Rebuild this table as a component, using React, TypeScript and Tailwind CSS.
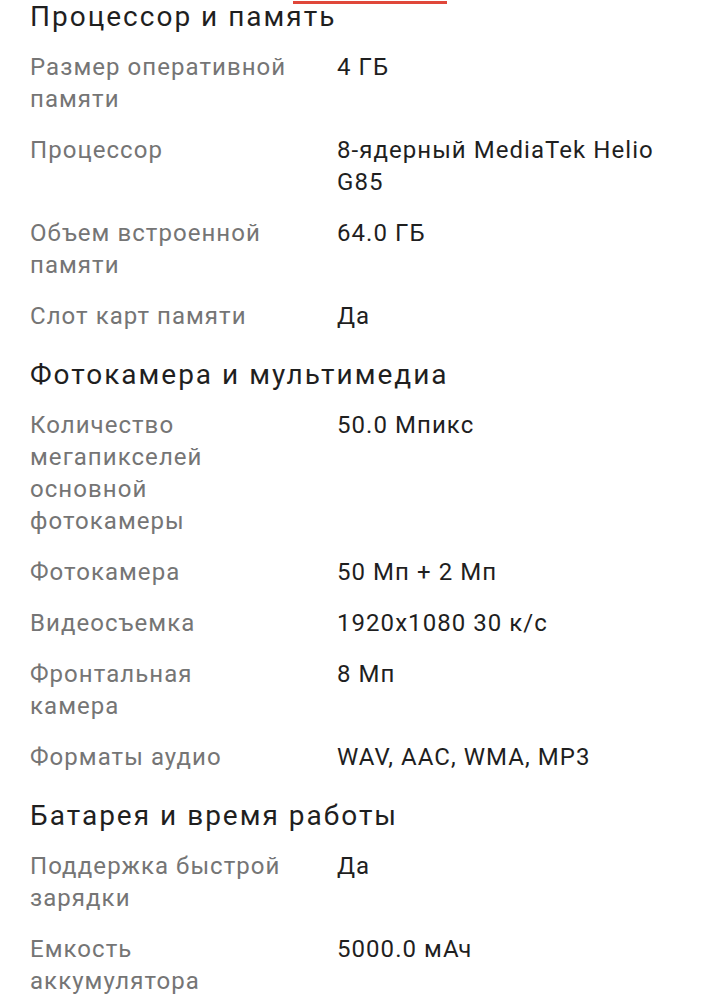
import { Fragment } from 'react'

interface Spec {
  label: string
  value: string
}

interface Section {
  title: string
  specs: Spec[]
}

// labels wrap on their own; \n forces a break where the device font wrapped earlier
const sections: Section[] = [
  {
    title: 'Процессор и память',
    specs: [
      { label: 'Размер оперативной памяти', value: '4 ГБ' },
      { label: 'Процессор', value: '8-ядерный MediaTek Helio G85' },
      { label: 'Объем встроенной памяти', value: '64.0 ГБ' },
      { label: 'Слот карт памяти', value: 'Да' },
    ],
  },
  {
    title: 'Фотокамера и мультимедиа',
    specs: [
      { label: 'Количество мегапикселей основной фотокамеры', value: '50.0 Мпикс' },
      { label: 'Фотокамера', value: '50 Мп + 2 Мп' },
      { label: 'Видеосъемка', value: '1920x1080 30 к/с' },
      { label: 'Фронтальная\nкамера', value: '8 Мп' },
      { label: 'Форматы аудио', value: 'WAV, AAC, WMA, MP3' },
    ],
  },
  {
    title: 'Батарея и время работы',
    specs: [
      { label: 'Поддержка быстрой зарядки', value: 'Да' },
      { label: 'Емкость аккумулятора', value: '5000.0 мАч' },
    ],
  },
]

function SpecSection({ section, first }: { section: Section; first: boolean }) {
  return (
    <section className={first ? '' : 'mt-[25px]'}>
      <h2 className="text-[28px] leading-[36px] tracking-[2px] text-[#1f1f1f] mb-[16px]">{section.title}</h2>
      <div className="grid grid-cols-[266px_1fr] gap-x-[41px] gap-y-[19px] text-[24px] leading-[32px] tracking-[1.05px]">
        {section.specs.map((s) => (
          <Fragment key={s.label}>
            <div className="text-[#757575] whitespace-pre-line">{s.label}</div>
            <div className="text-[#1f1f1f]">{s.value}</div>
          </Fragment>
        ))}
      </div>
    </section>
  )
}

export default function App() {
  return (
    <div
      className="relative w-[702px] h-[999px] overflow-hidden bg-white pl-[30px] pr-[20px] -mt-px"
      style={{ fontFamily: 'Roboto, "Noto Sans", sans-serif' }}
    >
      <div className="absolute left-[293px] top-[2px] w-[154px] h-[3px] bg-[#e0473a]" />
      {sections.map((sec, i) => (
        <SpecSection key={sec.title} section={sec} first={i === 0} />
      ))}
    </div>
  )
}
